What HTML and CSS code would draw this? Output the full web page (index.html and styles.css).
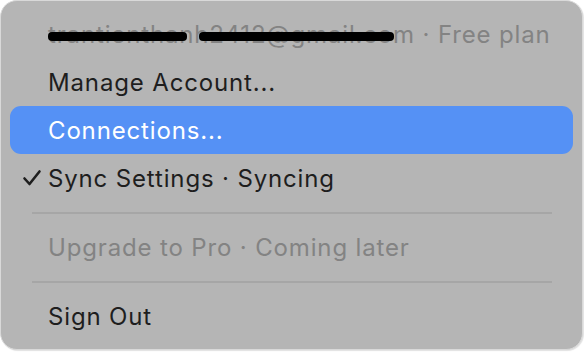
FILE: index.html
```html
<!DOCTYPE html>
<html>
<head>
<meta charset="utf-8">
<link rel="stylesheet" href="styles.css">
</head>
<body>
<div class="menu">
  <div class="item disabled account">
    <span class="label">trantienthanh2412@gmail.com · Free plan</span>
    <span class="redact r1"></span>
    <span class="redact r2"></span>
  </div>
  <div class="item">Manage Account...</div>
  <div class="item active">Connections...</div>
  <div class="item checked">
    <svg class="check" viewBox="0 0 20 20" width="20" height="20"><path d="M2.5 10.5 L7.5 16 L17.5 3.5" fill="none" stroke="#1e1e1e" stroke-width="2.6" stroke-linecap="round" stroke-linejoin="round"/></svg>
    Sync Settings · Syncing
  </div>
  <div class="sep"></div>
  <div class="item disabled">Upgrade to Pro · Coming later</div>
  <div class="sep"></div>
  <div class="item">Sign Out</div>
</div>
</body>
</html>
```

FILE: styles.css
```css
html, body {
  margin: 0;
  padding: 0;
  background: #ffffff;
}
body {
  width: 584px;
  height: 352px;
  font-family: Inter, "Noto Sans", sans-serif;
}
.menu {
  box-sizing: border-box;
  width: 583px;
  height: 350px;
  background: #b5b5b5;
  border-radius: 17px;
  border: 1px solid #d9d9d9;
  box-shadow: 1px 1px 1px rgba(0,0,0,0.12);
  padding: 9px 9px 8px 9px;
  display: flex;
  flex-direction: column;
}
.item {
  position: relative;
  height: 48px;
  display: flex;
  align-items: center;
  padding-left: 38px;
  font-size: 24px;
  color: #1e1e1e;
  border-radius: 11px;
  letter-spacing: 0.85px;
}
.item.disabled {
  color: #838383;
}
.item.active {
  background: #5591f5;
  color: #ffffff;
}
.check {
  position: absolute;
  left: 12px;
  top: 14px;
}
.sep {
  height: 21px;
  display: flex;
  align-items: center;
  padding: 0 21px 0 22px;
}
.sep::after {
  content: "";
  flex: 1;
  height: 2px;
  background: #a6a6a6;
}
.redact {
  position: absolute;
  height: 9px;
  top: 22px;
  background: #000;
  border-radius: 4px;
}
.r1 { left: 38px; width: 139px; }
.r2 { left: 189px; width: 195px; }
```
